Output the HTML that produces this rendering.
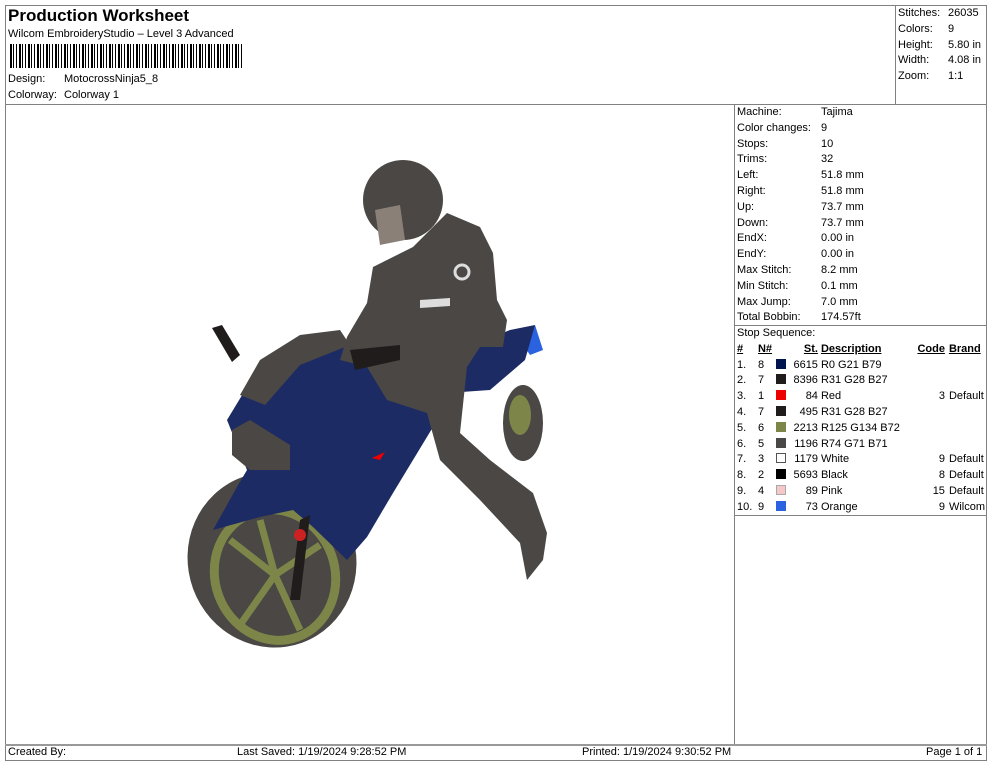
<!DOCTYPE html>
<html><head><meta charset="utf-8"><style>
*{margin:0;padding:0;box-sizing:border-box}
body{width:990px;height:762px;background:#fff;font-family:"Liberation Sans",Arial,sans-serif;font-size:11px;color:#000;position:relative;overflow:hidden}
.a{position:absolute;white-space:nowrap}
.line{position:absolute;background:#808080}
table{border-collapse:collapse;font-size:11px}
td{padding:0;height:15.8px;white-space:nowrap}
.sw{display:inline-block;width:10px;height:10px;vertical-align:-1px}
</style></head><body>
<!-- frame -->
<div class="line" style="left:5px;top:5px;width:982px;height:1px"></div>
<div class="line" style="left:5px;top:5px;width:1px;height:756px"></div>
<div class="line" style="left:986px;top:5px;width:1px;height:756px"></div>
<div class="line" style="left:5px;top:104px;width:982px;height:1px"></div>
<div class="line" style="left:895px;top:5px;width:1px;height:99px"></div>
<div class="line" style="left:734px;top:104px;width:1px;height:641px"></div>
<div class="line" style="left:734px;top:325px;width:253px;height:1px"></div>
<div class="line" style="left:734px;top:515px;width:253px;height:1px"></div>
<div class="line" style="left:5px;top:744px;width:982px;height:2px;background:#999"></div>
<div class="line" style="left:5px;top:760px;width:982px;height:1px"></div>

<div class="a" style="left:8px;top:6px;font-size:17px;font-weight:bold">Production Worksheet</div>
<div class="a" style="left:8px;top:28px">Wilcom EmbroideryStudio – Level 3 Advanced</div>
<div class="a" style="left:10px;top:44px;width:234px;height:24px;background:repeating-linear-gradient(90deg,#000 0 2px,#fff 2px 3px,#000 3px 4px,#fff 4px 6px,#000 6px 7px,#fff 7px 9px)"></div>
<div class="a" style="left:8px;top:73px">Design:</div><div class="a" style="left:64px;top:73px">MotocrossNinja5_8</div>
<div class="a" style="left:8px;top:89px">Colorway:</div><div class="a" style="left:64px;top:89px">Colorway 1</div>

<div class="a" style="left:898px;top:6px;line-height:15.8px">Stitches:<br>Colors:<br>Height:<br>Width:<br>Zoom:</div>
<div class="a" style="left:948px;top:6px;line-height:15.8px">26035<br>9<br>5.80 in<br>4.08 in<br>1:1</div>

<div class="a" style="left:737px;top:105px;line-height:15.8px">Machine:<br>Color changes:<br>Stops:<br>Trims:<br>Left:<br>Right:<br>Up:<br>Down:<br>EndX:<br>EndY:<br>Max Stitch:<br>Min Stitch:<br>Max Jump:<br>Total Bobbin:<br>Stop Sequence:</div>
<div class="a" style="left:821px;top:105px;line-height:15.8px">Tajima<br>9<br>10<br>32<br>51.8 mm<br>51.8 mm<br>73.7 mm<br>73.7 mm<br>0.00 in<br>0.00 in<br>8.2 mm<br>0.1 mm<br>7.0 mm<br>174.57ft</div>

<table class="a" style="left:737px;top:341px;width:248px">
<tr style="font-weight:bold;text-decoration:underline"><td style="width:21px">#</td><td style="width:18px">N#</td><td style="width:42px;text-align:right">St.</td><td style="padding-left:3px;width:86px">Description</td><td style="text-align:right;width:41px">Code</td><td style="padding-left:4px">Brand</td></tr>
<tr><td>1.</td><td>8</td><td><span class="sw" style="background:#00154f"></span><span style="float:right">6615</span></td><td style="padding-left:3px">R0 G21 B79</td><td></td><td></td></tr>
<tr><td>2.</td><td>7</td><td><span class="sw" style="background:#1f1c1b"></span><span style="float:right">8396</span></td><td style="padding-left:3px">R31 G28 B27</td><td></td><td></td></tr>
<tr><td>3.</td><td>1</td><td><span class="sw" style="background:#e00"></span><span style="float:right">84</span></td><td style="padding-left:3px">Red</td><td style="text-align:right">3</td><td style="padding-left:4px">Default</td></tr>
<tr><td>4.</td><td>7</td><td><span class="sw" style="background:#1f1c1b"></span><span style="float:right">495</span></td><td style="padding-left:3px">R31 G28 B27</td><td></td><td></td></tr>
<tr><td>5.</td><td>6</td><td><span class="sw" style="background:#7d8648"></span><span style="float:right">2213</span></td><td style="padding-left:3px">R125 G134 B72</td><td></td><td></td></tr>
<tr><td>6.</td><td>5</td><td><span class="sw" style="background:#4a4747"></span><span style="float:right">1196</span></td><td style="padding-left:3px">R74 G71 B71</td><td></td><td></td></tr>
<tr><td>7.</td><td>3</td><td><span class="sw" style="background:#fff;border:1px solid #555"></span><span style="float:right">1179</span></td><td style="padding-left:3px">White</td><td style="text-align:right">9</td><td style="padding-left:4px">Default</td></tr>
<tr><td>8.</td><td>2</td><td><span class="sw" style="background:#000"></span><span style="float:right">5693</span></td><td style="padding-left:3px">Black</td><td style="text-align:right">8</td><td style="padding-left:4px">Default</td></tr>
<tr><td>9.</td><td>4</td><td><span class="sw" style="background:#f4c8c8;border:1px solid #aaa"></span><span style="float:right">89</span></td><td style="padding-left:3px">Pink</td><td style="text-align:right">15</td><td style="padding-left:4px">Default</td></tr>
<tr><td>10.</td><td>9</td><td><span class="sw" style="background:#2a62e0"></span><span style="float:right">73</span></td><td style="padding-left:3px">Orange</td><td style="text-align:right">9</td><td style="padding-left:4px">Wilcom</td></tr>
</table>

<svg class="a" style="left:0;top:0" width="734" height="744" viewBox="0 0 734 744">
<defs><pattern id="st" width="4" height="4" patternUnits="userSpaceOnUse" patternTransform="rotate(-35)"><rect width="4" height="4" fill="none"/><rect width="4" height="1" fill="#000" opacity=".18"/></pattern></defs>
<!-- rear wheel -->
<ellipse cx="523" cy="423" rx="20" ry="38" fill="#4a4744"/>
<ellipse cx="520" cy="415" rx="11" ry="20" fill="#7d8648"/>
<!-- front wheel -->
<ellipse cx="272" cy="560" rx="84" ry="88" transform="rotate(-20 272 560)" fill="#4a4744"/>
<ellipse cx="275" cy="575" rx="60" ry="66" transform="rotate(-20 275 575)" fill="none" stroke="#7d8648" stroke-width="9"/>
<path d="M275 575 L230 540 M275 575 L320 545 M275 575 L300 630 M275 575 L240 625 M275 575 L260 520" stroke="#7d8648" stroke-width="7"/>
<!-- bike body -->
<path d="M227 420 L247 387 L280 357 L320 347 L387 347 L440 360 L447 393 L433 427 L413 460 L393 493 L367 537 L347 560 L313 527 L293 510 L260 517 L213 530 L237 487 L247 470 Z" fill="#1c2b63"/>
<path d="M535 325 L543 350 L530 355 L520 340 Z" fill="#2a62e0"/>
<path d="M440 360 L510 330 L535 325 L525 360 L490 390 L447 393Z" fill="#1c2b63"/>
<!-- windshield / headlight -->
<path d="M240 395 L260 360 L300 335 L340 330 L350 345 L300 365 L265 405 Z" fill="#4a4744"/>
<path d="M232 430 L250 420 L290 445 L290 470 L250 470 L232 455Z" fill="#4a4744"/>
<!-- fork -->
<path d="M300 520 L310 515 L300 600 L290 600Z" fill="#1f1c1b"/>
<circle cx="300" cy="535" r="6" fill="#c22"/>
<!-- mirror -->
<path d="M212 328 L222 325 L240 355 L232 362 Z" fill="#1f1c1b"/>
<!-- rider -->
<path d="M373 267 L413 247 L447 213 L480 227 L493 253 L497 300 L507 320 L503 347 L480 347 L467 367 L460 433 L490 460 L533 493 L547 533 L543 560 L527 580 L520 543 L480 500 L440 460 L427 413 L387 400 L367 367 L340 360 L347 337 L367 303 Z" fill="#4a4744"/>
<circle cx="403" cy="200" r="40" fill="#4a4744"/>
<path d="M375 210 L400 205 L405 240 L380 245Z" fill="#8a8078"/>
<path d="M420 300 L450 298 L450 306 L420 308Z" fill="#ddd"/>
<circle cx="462" cy="272" r="7" fill="none" stroke="#ddd" stroke-width="3"/>
<path d="M350 350 L400 345 L400 360 L355 370Z" fill="#1f1c1b"/>
<path d="M372 458 L385 452 L380 460Z" fill="#e00"/>
<rect x="0" y="0" width="734" height="744" fill="url(#st)" style="mix-blend-mode:multiply" opacity="0"/>
</svg>

<div class="a" style="left:8px;top:746px">Created By:</div>
<div class="a" style="left:237px;top:746px">Last Saved: 1/19/2024 9:28:52 PM</div>
<div class="a" style="left:582px;top:746px">Printed: 1/19/2024 9:30:52 PM</div>
<div class="a" style="left:926px;top:746px">Page 1 of 1</div>
</body></html>
